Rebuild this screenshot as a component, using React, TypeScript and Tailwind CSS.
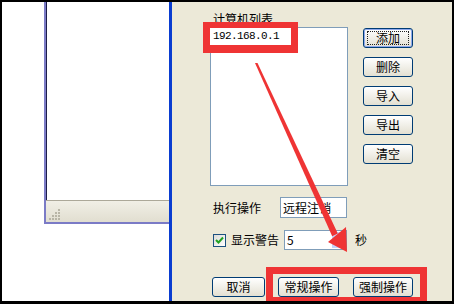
import React from 'react'

const cjk = "font-['SimSun','Noto_Sans_CJK_SC',sans-serif]"

function XpButton({ label, width, isDefault = false }: { label: string; width: string; isDefault?: boolean }) {
  return (
    <div
      className={`${width} h-[20px] flex items-center justify-center rounded-[3px] border border-[#003c74] bg-linear-to-b from-white to-[#e3e0d2] text-[12px] leading-[14px] text-black ${
        isDefault ? 'shadow-[inset_0_0_0_1px_#8fa9ee]' : ''
      }`}
    >
      {isDefault ? (
        <span className="flex items-center justify-center w-[42px] h-[14px] border border-dotted border-[#222]">{label}</span>
      ) : (
        label
      )}
    </div>
  )
}

function Gripper() {
  return (
    <svg width="12" height="12" viewBox="0 0 12 12">
      {[
        [9, 1],
        [6, 4],
        [9, 4],
        [3, 7],
        [6, 7],
        [9, 7],
        [0, 10],
        [3, 10],
        [6, 10],
        [9, 10],
      ].map(([x, y], i) => (
        <rect key={i} x={x} y={y} width="2" height="2" fill="#b8b5a6" />
      ))}
    </svg>
  )
}

export default function App() {
  return (
    <div className={`w-[454px] h-[304px] bg-black border-t-2 border-x-2 border-b-[3px] border-black ${cjk}`}>
      <div className="relative w-[450px] h-[299px] flex overflow-hidden">
        {/* background window */}
        <div className="w-[167px] h-full bg-white pl-[42px]">
          <div className="w-[125px] h-[222px] flex flex-col border-l-[2px] border-b-[2px] border-[#7b7bc6]">
            <div className="flex-1 bg-white border-l border-[#1d1d4a]" />
            <div className="h-[22px] flex items-end pl-[3px] pb-[2px] border-t border-[#aca899] bg-linear-to-b from-[#f1efe6] to-[#e1ded0]">
              <Gripper />
            </div>
          </div>
        </div>

        {/* dialog */}
        <div className="flex-1 h-full bg-[#ece9d8] border-l-[3px] border-[#0a3dd0] pl-[38px] pt-[10px] flex flex-col text-[12px] text-black">
          <div className="pl-[3px] leading-[14px] h-[15px]">计算机列表</div>
          <div className="flex gap-[15px]">
            <div className="w-[138px] h-[159px] bg-white border border-[#7f9db9]" />
            <div className="flex flex-col gap-[9px] pt-[1px]">
              <XpButton label="添加" width="w-[50px]" isDefault />
              <XpButton label="删除" width="w-[50px]" />
              <XpButton label="导入" width="w-[50px]" />
              <XpButton label="导出" width="w-[50px]" />
              <XpButton label="清空" width="w-[50px]" />
            </div>
          </div>

          <div className="flex items-center mt-[11px] pl-[3px]">
            <span className="w-[67px] leading-[14px]">执行操作</span>
            <div className="w-[67px] h-[21px] bg-white border border-[#7f9db9] flex items-center pl-[2px] leading-[14px]">
              远程注销
            </div>
          </div>

          <div className="flex items-center mt-[12px] pl-[3px]">
            <div className="w-[13px] h-[13px] border border-[#1c5180] bg-linear-to-br from-[#dcdcd7] to-white flex items-center justify-center">
              <svg width="9" height="9" viewBox="0 0 9 9">
                <path d="M1 4 L3.5 6.5 L8 1.5" stroke="#21a121" strokeWidth="2" fill="none" />
              </svg>
            </div>
            <span className="ml-[5px] w-[53px] leading-[14px]">显示警告</span>
            <div className="w-[63px] h-[20px] bg-white border border-[#7f9db9] flex">
              <span className="flex-1 pl-[2px] leading-[18px]">5</span>
              <div className="w-[15px] flex flex-col gap-px p-px">
                <div className="flex-1 bg-[#c6d5fb]" />
                <div className="flex-1 bg-[#c6d5fb]" />
              </div>
            </div>
            <span className="ml-[8px] leading-[14px]">秒</span>
          </div>

          <div className="flex items-center mt-[27px] pl-[2px]">
            <XpButton label="取消" width="w-[53px]" />
            <div className="ml-[13px]">
              <XpButton label="常规操作" width="w-[61px]" />
            </div>
            <div className="ml-[14px]">
              <XpButton label="强制操作" width="w-[60px]" />
            </div>
          </div>
        </div>

        {/* annotation: highlighted address */}
        <div className="absolute left-[201px] top-[20px] w-[95px] h-[31px] border-x-[7px] border-t-[6px] border-b-[8px] border-[#ef3434] bg-white flex items-center pl-[3px] font-['Liberation_Mono',monospace] text-[11px] tracking-[-0.6px] text-black">
          192.168.0.1
        </div>

        {/* annotation: highlighted buttons */}
        <div className="absolute left-[264px] top-[265px] w-[161px] h-[37px] border-[7px] border-[#ef3434]" />

        {/* annotation: arrow */}
        <svg className="absolute left-0 top-0" width="450" height="299" viewBox="2 2 450 299">
          <polygon points="255,63 257.5,63 337.8,233.5 332.2,236.3" fill="#ef3434" />
          <polygon points="347,252 328,242 346,227" fill="#ef3434" />
        </svg>
      </div>
    </div>
  )
}
